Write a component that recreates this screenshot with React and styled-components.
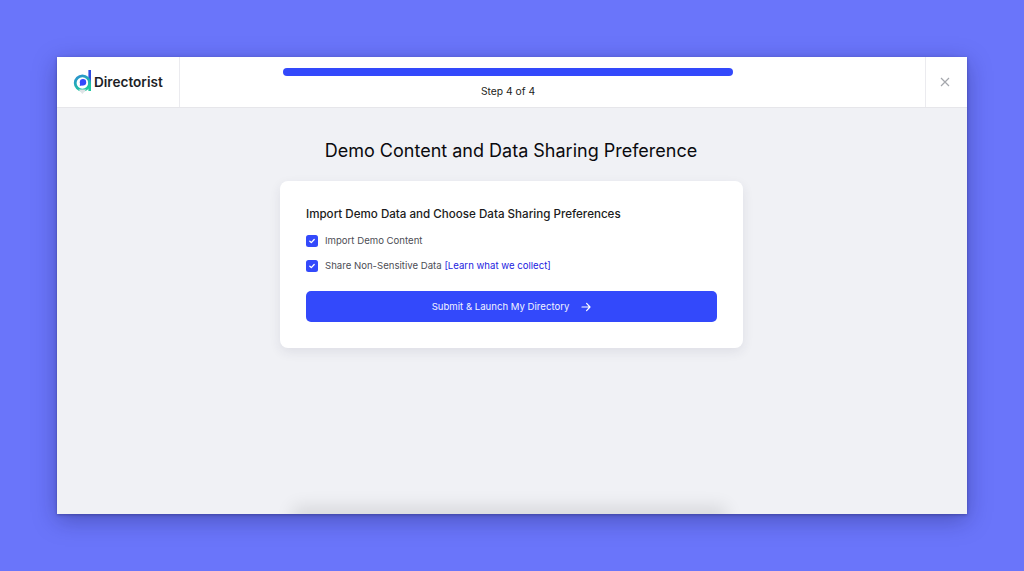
import React from 'react'
import styled, { createGlobalStyle } from 'styled-components'

const GlobalStyle = createGlobalStyle`
  html, body {
    margin: 0;
    padding: 0;
    height: 100%;
    background: #6a75fa;
    font-family: Inter, "Liberation Sans", sans-serif;
  }
  * { box-sizing: border-box; }
`

const Page = styled.div`
  width: 1024px;
  height: 571px;
  padding: 57px;
  background: #6a75fa;
  overflow: hidden;
`

const Window = styled.div`
  position: relative;
  width: 910px;
  height: 457px;
  display: flex;
  flex-direction: column;
  background: #f0f1f5;
  box-shadow: 0 1px 3px rgba(30, 30, 90, 0.4), 0 6px 22px rgba(20, 20, 80, 0.34);
  overflow: hidden;
`

const Header = styled.header`
  flex: 0 0 51px;
  display: flex;
  background: #fff;
  border-bottom: 1px solid #e6e6ea;
`

const LogoCell = styled.div`
  width: 123px;
  display: flex;
  align-items: center;
  padding-left: 16px;
  gap: 1px;
  border-right: 1px solid #ebebef;
`

const LogoText = styled.span`
  font-size: 13.6px;
  font-weight: 600;
  color: #1c1e26;
`

const Progress = styled.div`
  flex: 1;
  display: flex;
  flex-direction: column;
  align-items: center;
  padding-top: 11px;
  padding-right: 89px;
`

const Track = styled.div`
  width: 450px;
  height: 8px;
  border-radius: 4px;
  background: #3349fb;
`

const StepLabel = styled.div`
  margin-top: 8px;
  font-size: 10.3px;
  line-height: 14px;
  color: #1c1c20;
`

const CloseCell = styled.button`
  width: 42px;
  display: flex;
  align-items: center;
  justify-content: center;
  padding: 0 3px 0 0;
  background: none;
  border: 0;
  border-left: 1px solid #ebebef;
  color: #a5a7ad;
`

const Main = styled.main`
  flex: 1;
  display: flex;
  flex-direction: column;
  align-items: center;
  padding-top: 29px;
`

const Title = styled.h1`
  margin: 0 2px 0 0;
  font-size: 18px;
  line-height: 28px;
  font-weight: 400;
  color: #0a0a0e;
`

const Card = styled.section`
  width: 463px;
  height: 167px;
  margin-top: 16px;
  margin-right: 1px;
  padding: 26px;
  background: #fff;
  border-radius: 8px;
  box-shadow: 0 4px 12px rgba(40, 44, 80, 0.09);
`

const CardTitle = styled.h2`
  margin: 0;
  font-size: 11.6px;
  line-height: 14px;
  font-weight: 500;
  color: #1b1b20;
`

const Options = styled.div`
  margin-top: 14px;
  display: flex;
  flex-direction: column;
  gap: 13px;
`

const Option = styled.label`
  display: flex;
  align-items: center;
  gap: 7px;
  font-size: 9.6px;
  line-height: 12px;
  color: #4c4d55;
`

const Check = styled.span`
  width: 12px;
  height: 12px;
  flex: none;
  display: flex;
  align-items: center;
  justify-content: center;
  border-radius: 2.5px;
  background: #3349fb;
`

const LearnLink = styled.a`
  color: #2323e0;
`

const Submit = styled.button`
  width: 100%;
  height: 31px;
  margin-top: 19px;
  display: flex;
  align-items: center;
  justify-content: center;
  gap: 12px;
  border: 0;
  border-radius: 5px;
  background: #3349fb;
  color: #f2f3ff;
  font-family: inherit;
  font-size: 9.6px;
`

const BottomShade = styled.div`
  position: absolute;
  left: 240px;
  right: 245px;
  bottom: -14px;
  height: 14px;
  box-shadow: 0 -3px 18px 4px rgba(0, 0, 0, 0.11);
`

function CheckMark() {
  return (
    <svg width="8" height="8" viewBox="0 0 8 8" fill="none">
      <path d="M1.8 4.2 3.3 5.6 6.2 2.5" stroke="#fff" strokeWidth="1.3" strokeLinecap="round" strokeLinejoin="round" />
    </svg>
  )
}

function Logo() {
  return (
    <svg width="20" height="26" viewBox="0 0 20 26" fill="none">
      <defs>
        <linearGradient id="ring" x1="0" y1="0" x2="0.5" y2="1">
          <stop offset="0" stopColor="#2b8fd0" />
          <stop offset="1" stopColor="#1fc7a0" />
        </linearGradient>
      </defs>
      <path d="M15.4 1h2.6v15h-2.6z" fill="#2f4be0" />
      <path d="M15.4 15h2.6v7h-2.6z" fill="#1fc7a0" />
      <circle cx="9.4" cy="14" r="7.2" stroke="url(#ring)" strokeWidth="2.8" />
      <path d="M5.5 20.5 9.4 25 13.3 20.5z" fill="#dfe3e6" />
      <circle cx="10" cy="13.2" r="3.2" fill="#3349fb" />
      <path d="M6.8 17 7.2 13 10.6 16z" fill="#3349fb" />
    </svg>
  )
}

function CloseIcon() {
  return (
    <svg width="10" height="10" viewBox="0 0 10 10" fill="none">
      <path d="M1 1l8 8M9 1l-8 8" stroke="currentColor" strokeWidth="1.2" />
    </svg>
  )
}

function ArrowIcon() {
  return (
    <svg width="10" height="10" viewBox="0 0 10 10" fill="none">
      <path d="M1 5h8M5.6 1.4 9 5 5.6 8.6" stroke="#fff" strokeWidth="1.2" strokeLinecap="round" strokeLinejoin="round" />
    </svg>
  )
}

export default function App() {
  return (
    <Page>
      <GlobalStyle />
      <Window>
        <Header>
          <LogoCell>
            <Logo />
            <LogoText>Directorist</LogoText>
          </LogoCell>
          <Progress>
            <Track />
            <StepLabel>Step 4 of 4</StepLabel>
          </Progress>
          <CloseCell aria-label="Close">
            <CloseIcon />
          </CloseCell>
        </Header>
        <Main>
          <Title>Demo Content and Data Sharing Preference</Title>
          <Card>
            <CardTitle>Import Demo Data and Choose Data Sharing Preferences</CardTitle>
            <Options>
              <Option>
                <Check><CheckMark /></Check>
                Import Demo Content
              </Option>
              <Option>
                <Check><CheckMark /></Check>
                <span>Share Non-Sensitive Data <LearnLink>[Learn what we collect]</LearnLink></span>
              </Option>
            </Options>
            <Submit>
              Submit &amp; Launch My Directory
              <ArrowIcon />
            </Submit>
          </Card>
        </Main>
        <BottomShade />
      </Window>
    </Page>
  )
}
